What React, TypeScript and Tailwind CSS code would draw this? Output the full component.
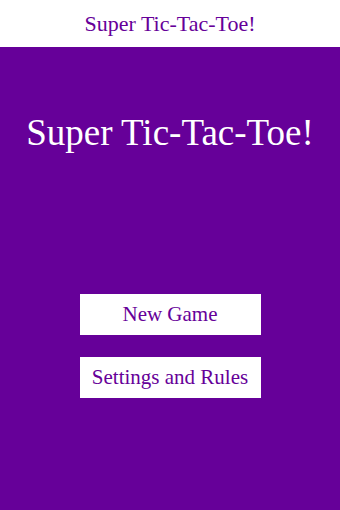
export default function App() {
  return (
    <div className="flex h-[510px] w-[340px] flex-col bg-[#660099] font-['Liberation_Serif',serif]">
      <header className="flex h-[47px] items-center justify-center bg-white">
        <span className="text-[22px] text-[#660099]">Super Tic-Tac-Toe!</span>
      </header>
      <main className="flex flex-1 flex-col items-center">
        <h1 className="mt-[62px] text-[37px] leading-[48px] text-white">Super Tic-Tac-Toe!</h1>
        <div className="mt-[137px] flex flex-col gap-[22px]">
          <button className="flex h-[41px] w-[181px] items-center justify-center bg-white text-[21px] text-[#660099]">
            New Game
          </button>
          <button className="flex h-[41px] w-[181px] items-center justify-center bg-white text-[21px] text-[#660099]">
            Settings and Rules
          </button>
        </div>
      </main>
    </div>
  );
}
